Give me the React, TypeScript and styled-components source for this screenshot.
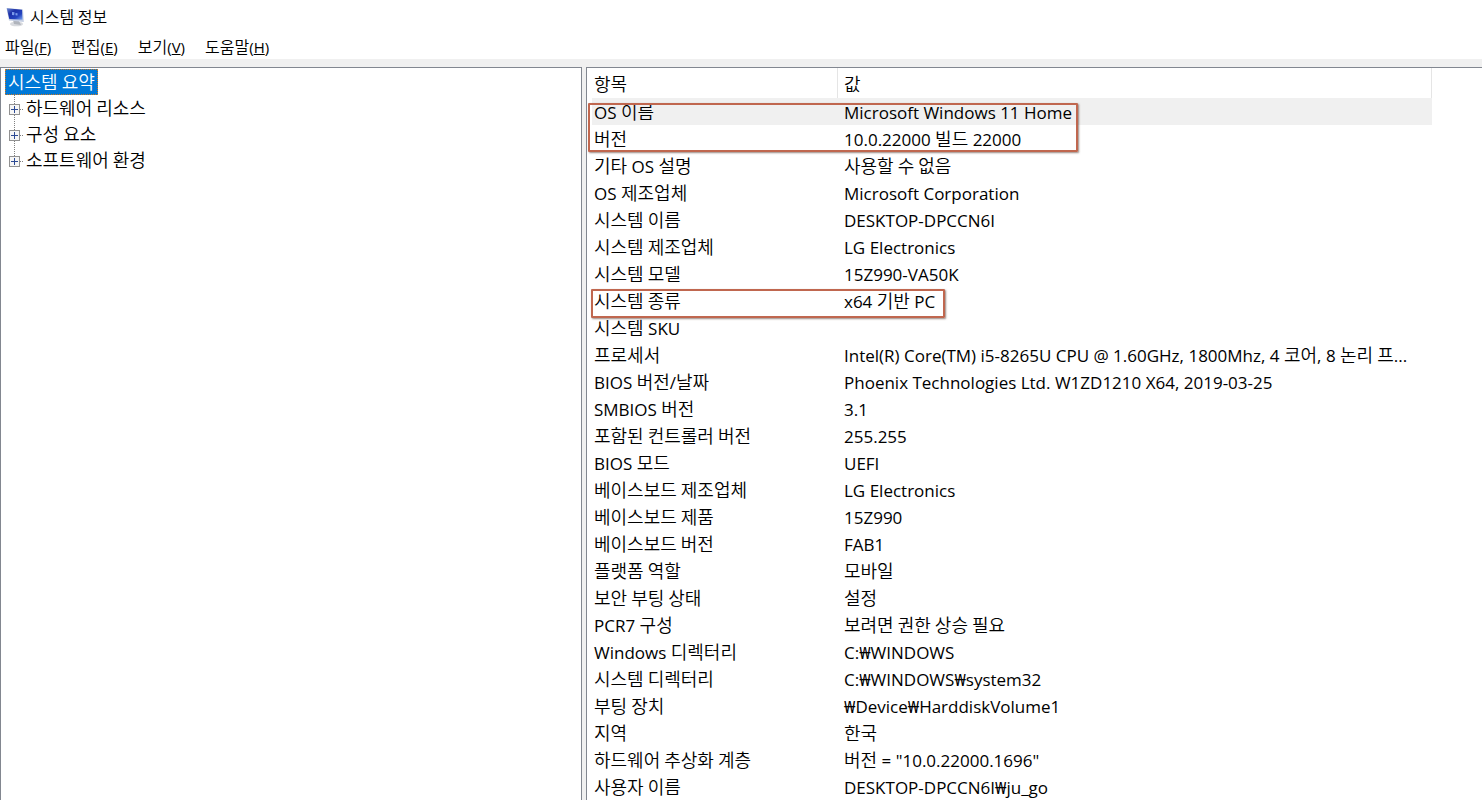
import React from 'react';
import styled, { createGlobalStyle } from 'styled-components';

const GlobalStyle = createGlobalStyle`
  * { box-sizing: border-box; }
  body { margin: 0; overflow: hidden; background: #fff; }
`;

const Window = styled.div`
  display: flex;
  flex-direction: column;
  height: 100vh;
  color: #000;
  background: #fff;
  font-family: 'Open Sans', 'Noto Sans', 'Noto Sans CJK KR', sans-serif;
  font-size: 17px;
`;

const TitleBar = styled.header`
  display: flex;
  align-items: center;
  gap: 6px;
  height: 34px;
  padding-left: 6px;
`;

const Title = styled.h1`
  margin: 0;
  font-size: 16px;
  font-weight: 400;
  line-height: 24px;
`;

const MenuBar = styled.nav`
  display: flex;
  gap: 20px;
  height: 25px;
  padding-left: 5px;
`;

const MenuButton = styled.button`
  padding: 0;
  border: 0;
  background: none;
  color: inherit;
  font: inherit;
  font-size: 15px;
  line-height: 24px;
`;

const Hangul = styled.span<{ $size: number }>`
  font-family: 'Noto Sans CJK KR', sans-serif;
  font-size: ${(p) => p.$size}px;
  font-weight: 350;
  line-height: 1;
`;

const Panes = styled.main`
  flex: 1;
  min-height: 0;
  display: grid;
  grid-template-columns: minmax(0, 582fr) minmax(0, 896fr);
  gap: 4px;
  padding-top: 8px;
  background: #f0f0f0;
`;

const TreePane = styled.section`
  padding: 1px 4px;
  border: 1px solid #828790;
  border-bottom: 0;
  background: #fff;
`;

const TreeItem = styled.button<{ $selected?: boolean }>`
  display: block;
  height: 26px;
  padding: 2px 2px 0;
  border: 1px dotted ${(p) => (p.$selected ? '#d07a20' : 'transparent')};
  background: ${(p) => (p.$selected ? '#0078d7' : 'none')};
  color: ${(p) => (p.$selected ? '#fff' : 'inherit')};
  font: inherit;
  line-height: 22px;
  white-space: nowrap;
`;

const Branches = styled.ul`
  margin: 0;
  padding: 0 0 0 3px;
  list-style: none;
`;

const Branch = styled.li`
  display: flex;
  height: 26px;
`;

const DetailPane = styled.section`
  position: relative;
  overflow: hidden;
  padding-left: 5px;
  border: solid #828790;
  border-width: 1px 0 0 1px;
  background: #fff;
`;

const Table = styled.table`
  width: 840px;
  border-collapse: separate;
  border-spacing: 0;
  table-layout: fixed;
`;

const HeadCell = styled.th<{ $width: number }>`
  width: ${(p) => p.$width}px;
  height: 30px;
  padding: 4px 0 0 2px;
  border-right: 1px solid #e5e5e5;
  font-weight: 400;
  line-height: 26px;
  text-align: left;

  & + & { padding-left: 6px; }
`;

const Row = styled.tr<{ $selected: boolean }>`
  height: 27px;
  background: ${(p) => (p.$selected ? '#f0f0f0' : 'transparent')};
`;

const Cell = styled.td`
  height: 27px;
  padding: 3px 0 0 2px;
  overflow: hidden;
  line-height: 24px;
  white-space: nowrap;

  & + & { padding-left: 6px; }
`;

const Highlight = styled.div<{ $top: number; $left: number; $width: number; $height: number }>`
  position: absolute;
  top: ${(p) => p.$top}px;
  left: ${(p) => p.$left}px;
  width: ${(p) => p.$width}px;
  height: ${(p) => p.$height}px;
  border: 2px solid #c0674f;
  border-radius: 1px;
  box-shadow: 1px 1px 2px rgba(70, 40, 30, 0.55);
  pointer-events: none;
`;

/* Hangul runs are set larger than Latin runs so both look the same size. */
function Text({ children, size = 18 }: { children: string; size?: number }) {
  return (
    <>
      {children.split(/([가-힣]+(?: [가-힣]+)*)/).map((run, i) =>
        i % 2 ? <Hangul key={i} $size={size}>{run}</Hangul> : run,
      )}
    </>
  );
}

function ComputerIcon() {
  return (
    <svg width="18" height="20" viewBox="0 0 18 20" aria-hidden="true">
      <defs>
        <linearGradient id="screen" x1="0" y1="0" x2="1" y2="1">
          <stop offset="0" stopColor="#6c88d0" />
          <stop offset="0.35" stopColor="#1c30a8" />
          <stop offset="0.7" stopColor="#2444c0" />
          <stop offset="1" stopColor="#7aa4f0" />
        </linearGradient>
      </defs>
      <ellipse cx="10.500" cy="17" rx="6.500" ry="2.300" fill="#d8dade" />
      <path d="M7 13l6 1 2 4-7-1z" fill="#b0b4bc" />
      <path d="M.5 1L17 2.500l.8 12.500L3 13.500z" fill="#c4cee2" />
      <path d="M.8 1.300L16 2.800l.5 10L3.300 12z" fill="url(#screen)" />
      <path d="M6 5l2.500.3-.3 3L6 8zM9.500 6l2 .2v2.300l-2-.2z" fill="#7c9cec" />
    </svg>
  );
}

function Expander({ last }: { last: boolean }) {
  return (
    <svg width="15" height="26" viewBox="0 0 15 26" shapeRendering="crispEdges" aria-hidden="true">
      <path d={last ? 'M6.500 0v9' : 'M6.500 0v26'} stroke="#808080" strokeDasharray="1 1" />
      <path d="M12 14.500h3" stroke="#808080" strokeDasharray="1 1" />
      <rect x="1.500" y="9.500" width="10" height="10" fill="#f6f6f6" stroke="#919191" />
      <path d="M3 14.500h7M6.500 11v7" stroke="#2c4a94" />
    </svg>
  );
}

const menus = [
  ['파일', 'F'],
  ['편집', 'E'],
  ['보기', 'V'],
  ['도움말', 'H'],
];

const branches = ['하드웨어 리소스', '구성 요소', '소프트웨어 환경'];

const items = [
  ['OS 이름', 'Microsoft Windows 11 Home'],
  ['버전', '10.0.22000 빌드 22000'],
  ['기타 OS 설명', '사용할 수 없음'],
  ['OS 제조업체', 'Microsoft Corporation'],
  ['시스템 이름', 'DESKTOP-DPCCN6I'],
  ['시스템 제조업체', 'LG Electronics'],
  ['시스템 모델', '15Z990-VA50K'],
  ['시스템 종류', 'x64 기반 PC'],
  ['시스템 SKU', ''],
  ['프로세서', 'Intel(R) Core(TM) i5-8265U CPU @ 1.60GHz, 1800Mhz, 4 코어, 8 논리 프...'],
  ['BIOS 버전/날짜', 'Phoenix Technologies Ltd. W1ZD1210 X64, 2019-03-25'],
  ['SMBIOS 버전', '3.1'],
  ['포함된 컨트롤러 버전', '255.255'],
  ['BIOS 모드', 'UEFI'],
  ['베이스보드 제조업체', 'LG Electronics'],
  ['베이스보드 제품', '15Z990'],
  ['베이스보드 버전', 'FAB1'],
  ['플랫폼 역할', '모바일'],
  ['보안 부팅 상태', '설정'],
  ['PCR7 구성', '보려면 권한 상승 필요'],
  ['Windows 디렉터리', 'C:₩WINDOWS'],
  ['시스템 디렉터리', 'C:₩WINDOWS₩system32'],
  ['부팅 장치', '₩Device₩HarddiskVolume1'],
  ['지역', '한국'],
  ['하드웨어 추상화 계층', '버전 = "10.0.22000.1696"'],
  ['사용자 이름', 'DESKTOP-DPCCN6I₩ju_go'],
];

export default function App() {
  return (
    <Window>
      <GlobalStyle />
      <TitleBar>
        <ComputerIcon />
        <Title><Text size={16}>시스템 정보</Text></Title>
      </TitleBar>
      <MenuBar>
        {menus.map(([label, key]) => (
          <MenuButton key={key} type="button">
            <Text size={16}>{label}</Text>(<u>{key}</u>)
          </MenuButton>
        ))}
      </MenuBar>
      <Panes>
        <TreePane>
          <TreeItem type="button" $selected><Text>시스템 요약</Text></TreeItem>
          <Branches>
            {branches.map((name, i) => (
              <Branch key={name}>
                <Expander last={i === branches.length - 1} />
                <TreeItem type="button"><Text>{name}</Text></TreeItem>
              </Branch>
            ))}
          </Branches>
        </TreePane>
        <DetailPane>
          <Table>
            <thead>
              <tr>
                <HeadCell $width={246}><Text>항목</Text></HeadCell>
                <HeadCell $width={594}><Text>값</Text></HeadCell>
              </tr>
            </thead>
            <tbody>
              {items.map(([name, value], i) => (
                <Row key={name} $selected={i === 0}>
                  <Cell><Text>{name}</Text></Cell>
                  <Cell><Text>{value}</Text></Cell>
                </Row>
              ))}
            </tbody>
          </Table>
          <Highlight $top={35} $left={1} $width={490} $height={49} />
          <Highlight $top={221} $left={4} $width={354} $height={29} />
        </DetailPane>
      </Panes>
    </Window>
  );
}
